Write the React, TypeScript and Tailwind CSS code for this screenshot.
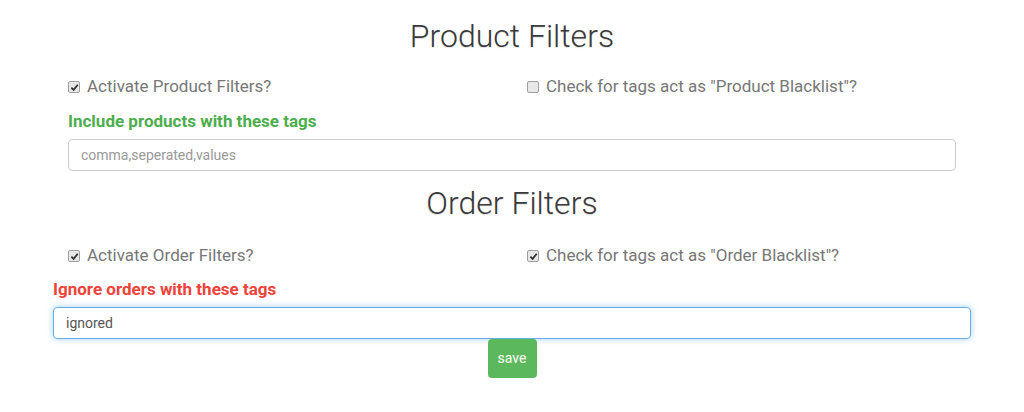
import React from "react";

function Check({ checked }: { checked: boolean }) {
  return (
    <span className="inline-flex items-center justify-center w-[12px] h-[12px] rounded-[2px] border border-[#a0a0a0] bg-[#e8e8e8] shrink-0">
      {checked && (
        <svg width="9" height="9" viewBox="0 0 10 10">
          <path d="M1.5 5.2 L4 7.6 L8.6 2" fill="none" stroke="#333" strokeWidth="2" />
        </svg>
      )}
    </span>
  );
}

function CheckRow({ left, right, leftOn, rightOn }: { left: string; right: string; leftOn: boolean; rightOn: boolean }) {
  return (
    <div className="grid grid-cols-2 h-[34px] items-center">
      <label className="flex items-center gap-[7px] px-[15px]">
        <Check checked={leftOn} />
        <span className="text-[17px] text-[#777]">{left}</span>
      </label>
      <label className="flex items-center gap-[7px] px-[15px]">
        <Check checked={rightOn} />
        <span className="text-[17px] text-[#777]">{right}</span>
      </label>
    </div>
  );
}

export default function App() {
  return (
    <div className="w-[1024px] h-[412px] bg-white font-['Roboto',sans-serif] overflow-hidden">
      <div className="w-[918px] ml-[53px]">
        <h1 className="text-center text-[32px] font-light text-[#3a3a3a] leading-none pt-[20px] h-[70px] [text-shadow:0_1px_1px_rgba(0,0,0,0.12)]">
          Product Filters
        </h1>
        <CheckRow left="Activate Product Filters?" right={'Check for tags act as "Product Blacklist"?'} leftOn={true} rightOn={false} />
        <div className="px-[15px]">
          <h3 className="text-[17px] font-bold text-[#4cae4c] leading-none mt-[9px] h-[26px]">Include products with these tags</h3>
          <input
            className="w-full h-[32px] border border-[#ccc] rounded-[4px] px-[12px] text-[14px] text-[#555] placeholder:text-[#999] outline-none"
            placeholder="comma,seperated,values"
          />
        </div>
        <h1 className="text-center text-[32px] font-light text-[#3a3a3a] leading-none pt-[16px] h-[68px] [text-shadow:0_1px_1px_rgba(0,0,0,0.12)]">
          Order Filters
        </h1>
        <CheckRow left="Activate Order Filters?" right={'Check for tags act as "Order Blacklist"?'} leftOn={true} rightOn={true} />
        <h3 className="text-[17px] font-bold text-[#f0433a] leading-none mt-[8px] h-[26px]">Ignore orders with these tags</h3>
        <input
          className="w-full h-[32px] border border-[#66afe9] rounded-[4px] px-[12px] text-[14px] text-[#555] outline-none shadow-[0_0_6px_rgba(102,175,233,0.6)]"
          defaultValue="ignored"
        />
        <div className="flex justify-center">
          <button className="w-[49px] h-[39px] rounded-[4px] bg-[#5cb85c] text-white text-[14px]">save</button>
        </div>
      </div>
    </div>
  );
}
